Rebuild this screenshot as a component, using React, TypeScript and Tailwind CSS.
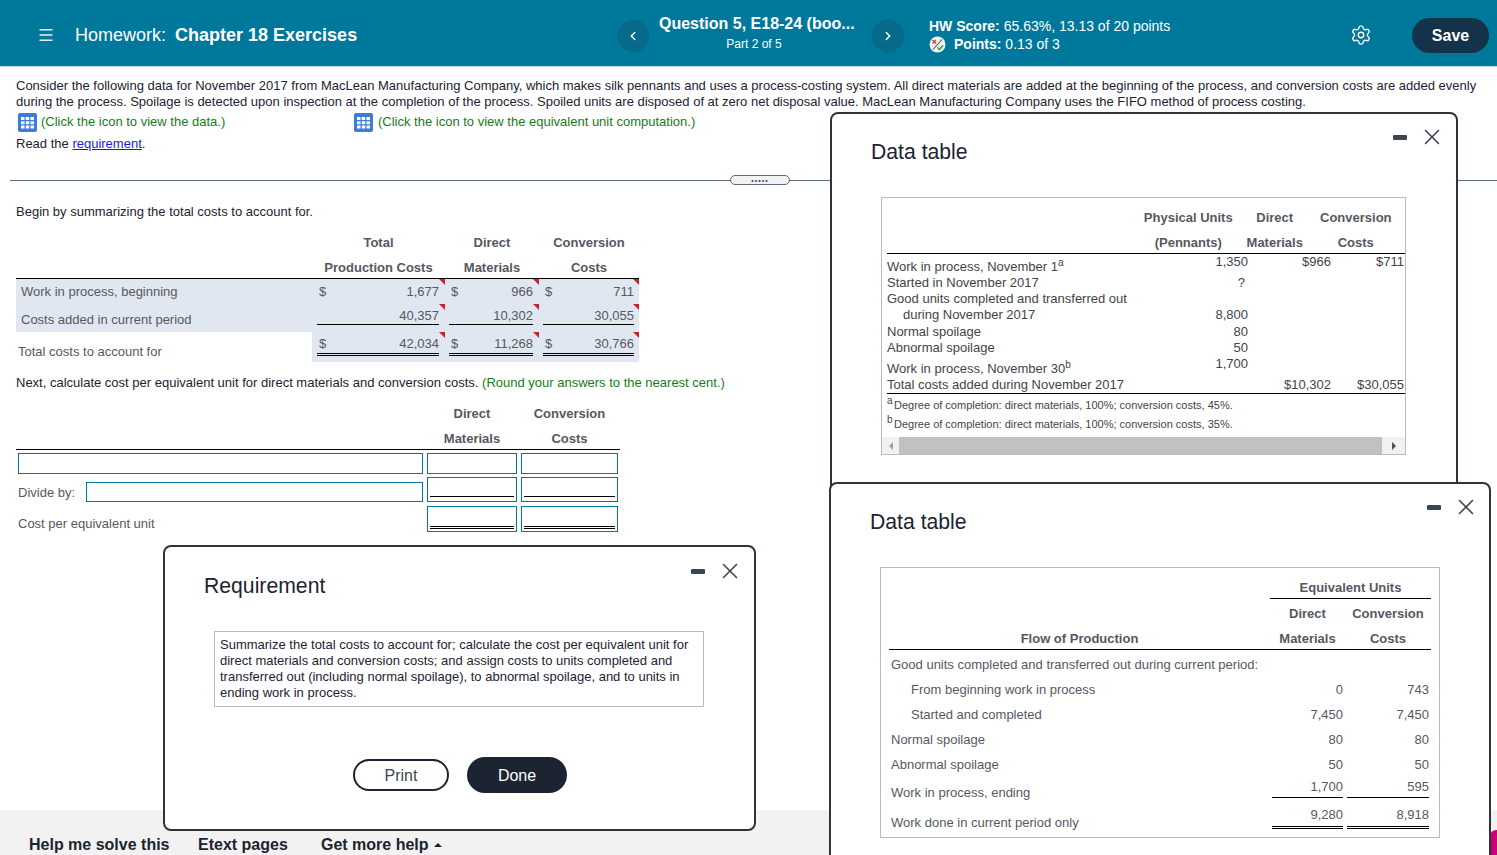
import { ChevronLeft, ChevronRight, Menu, Settings, X } from "lucide-react";
import type { ReactNode } from "react";

const font = "font-['Liberation_Sans',Arial,sans-serif]";

function GridIcon() {
  return (
    <svg width="19" height="19" viewBox="0 0 19 19" className="shrink-0">
      <rect x="0" y="0" width="19" height="19" rx="2" fill="#3b7dd8" />
      <g fill="#ffffff">
        <rect x="3" y="4" width="3.5" height="3" />
        <rect x="7.75" y="4" width="3.5" height="3" />
        <rect x="12.5" y="4" width="3.5" height="3" />
        <rect x="3" y="8.25" width="3.5" height="3" />
        <rect x="7.75" y="8.25" width="3.5" height="3" />
        <rect x="12.5" y="8.25" width="3.5" height="3" />
        <rect x="3" y="12.5" width="3.5" height="3" />
        <rect x="7.75" y="12.5" width="3.5" height="3" />
        <rect x="12.5" y="12.5" width="3.5" height="3" />
      </g>
    </svg>
  );
}

function PointsIcon() {
  return (
    <svg width="17" height="17" viewBox="0 0 17 17" className="shrink-0">
      <circle cx="8.5" cy="8.5" r="8" fill="#f1f1f1" />
      <path d="M3.5 4l3.5 3.5M7 4L3.5 7.5" stroke="#c8414b" strokeWidth="1.4" />
      <path d="M4 13.5L13 3.5" stroke="#555" strokeWidth="1.1" />
      <path d="M8.5 11.5l2 2 3.5-4" stroke="#2f9e44" strokeWidth="1.5" fill="none" />
    </svg>
  );
}

function Flag() {
  return <span className="absolute top-0 right-0 w-0 h-0 border-l-[6px] border-l-transparent border-t-[6px] border-t-[#c8232c]" />;
}

// one money cell of the cost summary
function CostCell({ width, pad, dollar, value, rule }: { width: string; pad: string; dollar?: boolean; value: string; rule?: "single" | "double" }) {
  return (
    <div className={`relative h-full ${width} ${pad}`}>
      <Flag />
      <div
        className={`flex justify-between h-full pl-[2px] text-[#55595f] ${
          rule === "single" ? "border-b border-black" : rule === "double" ? "border-b-[3px] border-double border-black" : ""
        }`}
      >
        <span>{dollar ? "$" : ""}</span>
        <span>{value}</span>
      </div>
    </div>
  );
}

function AnswerBox({ className, rule }: { className: string; rule?: "single" | "double" }) {
  return (
    <div className={`border border-[#00789c] bg-white px-[2px] ${className}`}>
      {rule && <div className={rule === "single" ? "h-[19px] border-b border-black" : "h-[22px] border-b-[3px] border-double border-black"} />}
    </div>
  );
}

function WindowControls({ className }: { className: string }) {
  return (
    <div className={`absolute flex items-center ${className}`}>
      <span className="w-[14px] h-[5px] rounded-[1px] bg-[#3d4650]" />
      <X size={26} strokeWidth={1.5} className="ml-[12px] text-[#3d4650]" />
    </div>
  );
}

function Win({ className, title, titleClass, controls, children }: { className: string; title: string; titleClass: string; controls: string; children: ReactNode }) {
  return (
    <section className={`absolute bg-white border-2 border-[#30343a] rounded-[8px] ${className}`}>
      <h2 className={`absolute text-[21.2px] leading-[26px] text-[#1c2331] ${titleClass}`}>{title}</h2>
      <WindowControls className={controls} />
      {children}
    </section>
  );
}

const physicalRows: { label: ReactNode; units?: string; dm?: string; cc?: string; h: string; up?: boolean }[] = [
  { label: <>Work in process, November 1<sup className="text-[10px]">a</sup></>, units: "1,350", dm: "$966", cc: "$711", h: "h-[20px]", up: true },
  { label: "Started in November 2017", units: "?", h: "h-[16px]" },
  { label: "Good units completed and transferred out", h: "h-[16px]" },
  { label: <span className="pl-[16px]">during November 2017</span>, units: "8,800", h: "h-[17px]" },
  { label: "Normal spoilage", units: "80", h: "h-[16px]" },
  { label: "Abnormal spoilage", units: "50", h: "h-[16px]" },
  { label: <>Work in process, November 30<sup className="text-[10px]">b</sup></>, units: "1,700", h: "h-[21px]", up: true },
  { label: "Total costs added during November 2017", dm: "$10,302", cc: "$30,055", h: "h-[15px]" },
];

const flowRows: { label: string; indent?: boolean; dm: string; cc: string; rule?: "single" | "double"; h: string; labelPad: string; numPad: string }[] = [
  { label: "From beginning work in process", indent: true, dm: "0", cc: "743", h: "h-[25px]", labelPad: "pt-[7px]", numPad: "pt-[7px]" },
  { label: "Started and completed", indent: true, dm: "7,450", cc: "7,450", h: "h-[25px]", labelPad: "pt-[7px]", numPad: "pt-[7px]" },
  { label: "Normal spoilage", dm: "80", cc: "80", h: "h-[25px]", labelPad: "pt-[7px]", numPad: "pt-[7px]" },
  { label: "Abnormal spoilage", dm: "50", cc: "50", h: "h-[25px]", labelPad: "pt-[7px]", numPad: "pt-[7px]" },
  { label: "Work in process, ending", dm: "1,700", cc: "595", rule: "single", h: "h-[23px]", labelPad: "pt-[10px]", numPad: "pt-[4px]" },
  { label: "Work done in current period only", dm: "9,280", cc: "8,918", rule: "double", h: "h-[31px]", labelPad: "pt-[17px]", numPad: "pt-[9px]" },
];

export default function App() {
  return (
    <div className={`${font} relative flex flex-col w-[1497px] h-[855px] overflow-hidden bg-white text-[13px] leading-[16px] text-[#1c2331]`}>
      <header className="flex items-center h-[67px] pt-[3px] shrink-0 bg-[#00789c] text-white border-b border-[#c8d8e0]">
        <Menu size={18} strokeWidth={1.8} className="ml-[37px] text-[#e6f0f4]" />
        <div className="ml-[20px] w-[542px] text-[18px] leading-[24px]">
          Homework: <b className="ml-[4px]">Chapter 18 Exercises</b>
        </div>
        <span className="flex items-center justify-center w-[32px] h-[32px] rounded-full bg-[#066a8a] mt-[3px]">
          <ChevronLeft size={14} strokeWidth={2.5} />
        </span>
        <div className="w-[223px] -mt-[1px]">
          <div className="pl-[10px] text-[16px] font-bold leading-[20px]">Question 5, E18-24 (boo...</div>
          <div className="pr-[13px] text-center text-[12px] leading-[20px]">Part 2 of 5</div>
        </div>
        <span className="flex items-center justify-center w-[32px] h-[32px] rounded-full bg-[#066a8a] mt-[3px]">
          <ChevronRight size={14} strokeWidth={2.5} />
        </span>
        <div className="ml-[25px] w-[421px] text-[14px] leading-[18px] mt-[1px]">
          <div><b>HW Score:</b> 65.63%, 13.13 of 20 points</div>
          <div className="flex items-center gap-[8px]"><PointsIcon /><span><b>Points:</b> 0.13 of 3</span></div>
        </div>
        <Settings size={22} strokeWidth={1.5} className="mt-[1px]" />
        <button className="ml-[40px] w-[77px] h-[35px] rounded-full bg-[#14324a] text-[16px] font-bold mt-[2px]">Save</button>
      </header>

      <main className="flex-1 min-h-0">
        <div className="relative ml-[10px] pl-[6px] pr-[12px] pt-[11px] h-[114px] border-b border-[#5f6b78]">
          <p>
            Consider the following data for November 2017 from MacLean Manufacturing Company, which makes silk pennants and uses a process-costing system. All direct materials are added at the beginning of the process, and conversion costs are added evenly during the process. Spoilage is detected upon inspection at the completion of the process. Spoiled units are disposed of at zero net disposal value. MacLean Manufacturing Company uses the FIFO method of process costing.
          </p>
          <div className="flex items-center h-[20px] mt-[2px] pl-[2px] text-[#1a7a1a]">
            <div className="flex items-center gap-[4px] w-[336px]"><GridIcon />(Click the icon to view the data.)</div>
            <div className="flex items-center gap-[5px]"><GridIcon />(Click the icon to view the equivalent unit computation.)</div>
          </div>
          <p className="mt-[4px]">Read the <a className="text-[#1a1ae6] underline">requirement</a>.</p>
          <span className="absolute left-[720px] -bottom-[5px] flex items-center justify-center w-[60px] h-[10px] rounded-full border border-[#5f6b78] bg-[#f0f2f4] text-[7px] leading-none tracking-[1px] text-[#444]">•••••</span>
        </div>

        <div className="pl-[16px] pt-[23px]">
          <p>Begin by summarizing the total costs to account for.</p>

          <div className="w-[623px] mt-[9px] text-[#55595f]">
            <div className="flex font-bold h-[25px] items-end pb-[3px]">
              <span className="w-[296px]" />
              <span className="w-[133px] text-center">Total</span>
              <span className="w-[94px] text-center">Direct</span>
              <span className="w-[100px] text-center">Conversion</span>
            </div>
            <div className="flex font-bold h-[25px] items-end pb-[2px] border-b border-black">
              <span className="w-[296px]" />
              <span className="w-[133px] text-center">Production Costs</span>
              <span className="w-[94px] text-center">Materials</span>
              <span className="w-[100px] text-center">Costs</span>
            </div>
            <div className="flex h-[25px] bg-[#e1e7f1]">
              <span className="w-[296px] pl-[5px] pt-[5px]">Work in process, beginning</span>
              <CostCell width="w-[133px]" pad="pl-[5px] pr-[6px] pt-[5px]" dollar value="1,677" />
              <CostCell width="w-[94px]" pad="pl-[4px] pr-[6px] pt-[5px]" dollar value="966" />
              <CostCell width="w-[100px]" pad="pl-[4px] pr-[5px] pt-[5px]" dollar value="711" />
            </div>
            <div className="flex h-[28px] bg-[#e1e7f1]">
              <span className="w-[296px] pl-[5px] pt-[8px]">Costs added in current period</span>
              <CostCell width="w-[133px]" pad="pl-[5px] pr-[6px] pt-[4px] pb-[7px]" value="40,357" rule="single" />
              <CostCell width="w-[94px]" pad="pl-[4px] pr-[6px] pt-[4px] pb-[7px]" value="10,302" rule="single" />
              <CostCell width="w-[100px]" pad="pl-[4px] pr-[5px] pt-[4px] pb-[7px]" value="30,055" rule="single" />
            </div>
            <div className="flex h-[30px]">
              <span className="w-[296px] pl-[2px] pt-[12px] bg-white">Total costs to account for</span>
              <CostCell width="w-[133px] bg-[#e1e7f1]" pad="pl-[5px] pr-[6px] pb-[6px] pt-[4px]" dollar value="42,034" rule="double" />
              <CostCell width="w-[94px] bg-[#e1e7f1]" pad="pl-[4px] pr-[6px] pb-[6px] pt-[4px]" dollar value="11,268" rule="double" />
              <CostCell width="w-[100px] bg-[#e1e7f1]" pad="pl-[4px] pr-[5px] pb-[6px] pt-[4px]" dollar value="30,766" rule="double" />
            </div>
          </div>

          <p className="mt-[13px]">
            Next, calculate cost per equivalent unit for direct materials and conversion costs. <span className="text-[#1a7a1a]">(Round your answers to the nearest cent.)</span>
          </p>

          <div className="w-[604px] mt-[10px] text-[#55595f]">
            <div className="flex font-bold h-[25px] items-end pb-[4px]">
              <span className="w-[409px]" />
              <span className="w-[94px] text-center">Direct</span>
              <span className="w-[101px] text-center">Conversion</span>
            </div>
            <div className="flex font-bold h-[24px] items-end pb-[2px] border-b border-black">
              <span className="w-[409px]" />
              <span className="w-[94px] text-center">Materials</span>
              <span className="w-[101px] text-center">Costs</span>
            </div>
            <div className="flex h-[21px] mt-[3px] pl-[2px]">
              <AnswerBox className="w-[405px]" />
              <AnswerBox className="w-[90px] ml-[4px]" />
              <AnswerBox className="w-[97px] ml-[4px]" />
            </div>
            <div className="flex h-[25px] mt-[3px] pl-[2px]">
              <span className="w-[68px] pt-[8px]">Divide by:</span>
              <AnswerBox className="w-[337px] h-[20px] mt-[5px]" />
              <AnswerBox className="w-[90px] ml-[4px]" rule="single" />
              <AnswerBox className="w-[97px] ml-[4px]" rule="single" />
            </div>
            <div className="flex h-[26px] mt-[4px] pl-[2px]">
              <span className="w-[405px] pt-[10px]">Cost per equivalent unit</span>
              <AnswerBox className="w-[90px] ml-[4px]" rule="double" />
              <AnswerBox className="w-[97px] ml-[4px]" rule="double" />
            </div>
          </div>
        </div>
      </main>

      <footer className="flex items-end h-[45px] shrink-0 pl-[29px] bg-[#f2f2f2] text-[16px] leading-[20px] font-bold text-[#1c2331]">
        <span className="w-[169px]">Help me solve this</span>
        <span className="w-[123px]">Etext pages</span>
        <span className="flex items-center">Get more help<span className="ml-[5px] w-0 h-0 border-x-[4px] border-x-transparent border-b-[4px] border-b-[#1c2331]" /></span>
      </footer>
      <span className="absolute right-0 bottom-0 w-[7px] h-[25px] bg-[#c8007a] rounded-tl-[6px]" />

      <Win className="left-[830px] top-[112px] w-[628px] h-[420px]" title="Data table" titleClass="left-[39px] top-[25px]" controls="right-[11px] top-[10px]">
        <div className="absolute left-[49px] top-[83px] w-[525px] h-[258px] border border-[#bbbbbb] flex flex-col text-[#3f444a]">
          <div className="flex-1 pl-[5px] overflow-hidden">
            <div className="flex font-bold text-[#55595f] h-[28px] pt-[12px]">
              <span className="w-[248px]" />
              <span className="w-[110px] text-center">Physical Units</span>
              <span className="w-[64px] text-center">Direct</span>
              <span className="w-[99px] text-center">Conversion</span>
            </div>
            <div className="flex font-bold text-[#55595f] h-[28px] items-end pb-[2px] border-b border-black">
              <span className="w-[248px]" />
              <span className="w-[110px] text-center">(Pennants)</span>
              <span className="w-[64px] text-center">Materials</span>
              <span className="w-[99px] text-center">Costs</span>
            </div>
            {physicalRows.map((r, i) => (
              <div key={i} className={`flex pt-[1px] ${r.h} ${i === 7 ? "border-b border-black box-content pb-[1px]" : ""}`}>
                <span className={`w-[300px] ${r.up ? (i === 0 ? "pt-[4px]" : "pt-[5px]") : ""}`}>{r.label}</span>
                <span className={`w-[61px] text-right ${i === 0 ? "-mt-[1px]" : ""} ${r.units === "?" ? "pr-[3px]" : ""}`}>{r.units}</span>
                <span className={`w-[83px] text-right ${i === 0 ? "-mt-[1px]" : ""}`}>{r.dm}</span>
                <span className={`w-[73px] text-right ${i === 0 ? "-mt-[1px]" : ""}`}>{r.cc}</span>
              </div>
            ))}
            <div className="text-[11px] leading-[19px] mt-[2px]"><sup className="inline-block w-[7px] text-[10px]">a</sup>Degree of completion: direct materials, 100%; conversion costs, 45%.</div>
            <div className="text-[11px] leading-[19px]"><sup className="inline-block w-[7px] text-[10px]">b</sup>Degree of completion: direct materials, 100%; conversion costs, 35%.</div>
          </div>
          <div className="flex items-center h-[17px] shrink-0 bg-[#f1f1f1]">
            <span className="w-[17px] flex justify-center"><span className="w-0 h-0 border-y-[4px] border-y-transparent border-r-[4px] border-r-[#a0a0a0]" /></span>
            <span className="flex-1 h-full bg-[#c1c1c1]" />
            <span className="w-[23px] flex justify-center"><span className="w-0 h-0 border-y-[4px] border-y-transparent border-l-[4px] border-l-[#505050]" /></span>
          </div>
        </div>
      </Win>

      <Win className="left-[829px] top-[482px] w-[662px] h-[420px]" title="Data table" titleClass="left-[39px] top-[25px]" controls="right-[10px] top-[10px]">
        <div className="absolute left-[49px] top-[83px] w-[560px] h-[271px] border border-[#bbbbbb] pl-[8px] text-[#55595f]">
          <div className="flex font-bold h-[31px] items-end">
            <span className="w-[381px]" />
            <span className="w-[161px] pb-[2px] text-center border-b border-black">Equivalent Units</span>
          </div>
          <div className="flex font-bold h-[26px] items-end pb-[3px]">
            <span className="w-[381px]" />
            <span className="w-[75px] text-center">Direct</span>
            <span className="w-[86px] text-center">Conversion</span>
          </div>
          <div className="flex font-bold h-[25px] w-[542px] items-end pb-[2px] border-b border-black">
            <span className="w-[381px] text-center">Flow of Production</span>
            <span className="w-[75px] text-center">Materials</span>
            <span className="w-[86px] text-center">Costs</span>
          </div>
          <div className="h-[25px] pl-[2px] pt-[7px]">Good units completed and transferred out during current period:</div>
          {flowRows.map((r) => {
            const ruleClass = r.rule === "single" ? "border-b border-black" : r.rule === "double" ? "border-b-[3px] border-double border-black" : "";
            return (
              <div key={r.label} className={`flex ${r.h}`}>
                <span className={`w-[383px] ${r.labelPad} ${r.indent ? "pl-[22px]" : "pl-[2px]"}`}>{r.label}</span>
                <span className={`w-[71px] h-full text-right ${r.numPad} ${ruleClass}`}>{r.dm}</span>
                <span className={`w-[82px] ml-[4px] h-full text-right ${r.numPad} ${ruleClass}`}>{r.cc}</span>
              </div>
            );
          })}
        </div>
      </Win>

      <Win className="left-[163px] top-[545px] w-[593px] h-[286px]" title="Requirement" titleClass="left-[39px] top-[26px]" controls="right-[11px] top-[11px]">
        <div className="absolute left-[49px] top-[84px] w-[490px] h-[76px] border border-[#bbbbbb] px-[5px] pt-[5px] text-[#1c2331]">
          Summarize the total costs to account for; calculate the cost per equivalent unit for direct materials and conversion costs; and assign costs to units completed and transferred out (including normal spoilage), to abnormal spoilage, and to units in ending work in process.
        </div>
        <div className="absolute left-[188px] top-[210px] flex items-center gap-[18px] text-[16px]">
          <button className="w-[96px] h-[32px] pt-[1px] rounded-full border-2 border-[#1c2331] text-[#3d4650]">Print</button>
          <button className="w-[100px] h-[36px] pt-[1px] rounded-full bg-[#1c2331] text-white">Done</button>
        </div>
      </Win>
    </div>
  );
}
